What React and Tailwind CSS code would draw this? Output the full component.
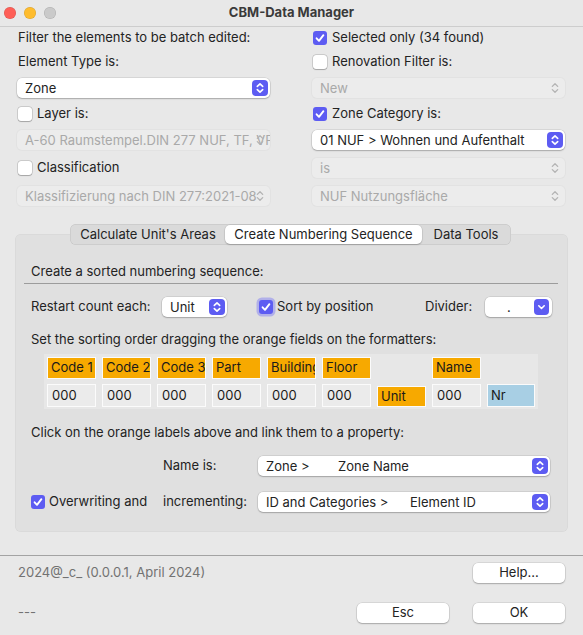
import React from "react";

const Chevrons = ({ color = "#fff", w = 1.6 }) => (
  <svg width="16" height="16" viewBox="0 0 16 16" fill="none" stroke={color} strokeWidth={w} strokeLinecap="round" strokeLinejoin="round">
    <path d="M5.3 6.4 8 3.8l2.7 2.6" />
    <path d="M5.3 9.6 8 12.2l2.7-2.6" />
  </svg>
);

const ChevronDown = () => (
  <svg width="15" height="16" viewBox="0 0 15 16" fill="none" stroke="#fff" strokeWidth="1.6" strokeLinecap="round" strokeLinejoin="round">
    <path d="M4.8 6.8 7.5 9.5l2.7-2.7" />
  </svg>
);

function Popup({ children, disabled, className = "" }) {
  return (
    <div
      className={`relative flex items-center h-[20px] rounded-[5px] ${
        disabled
          ? "bg-[#ececec] shadow-[0_0_0_1px_#e2e2e2] text-[#a9a9a9]"
          : "bg-white shadow-[0_0_0_0.5px_rgba(0,0,0,0.14),0_1px_1.5px_rgba(0,0,0,0.22)] text-[#232323]"
      } ${className}`}
    >
      <div className="flex-1 pl-[8px] whitespace-nowrap overflow-hidden leading-[20px]">{children}</div>
      {disabled ? (
        <div className="absolute right-[2px] top-[2px] w-[16px] h-[16px] flex items-center justify-center">
          <Chevrons color="#b3b3b3" w={1.3} />
        </div>
      ) : (
        <div className="absolute right-[2px] top-[2px] w-[16px] h-[16px] rounded-[4px] bg-[#5d5cf2] flex items-center justify-center">
          <Chevrons />
        </div>
      )}
    </div>
  );
}

function Check({ checked, ring }) {
  return checked ? (
    <div className={`w-[14px] h-[14px] rounded-[3px] bg-[#5d5cf2] flex items-center justify-center shrink-0 ${ring ? "shadow-[0_0_0_2.5px_rgba(120,118,245,0.45)]" : ""}`}>
      <svg width="12" height="12" viewBox="0 0 12 12" fill="none" stroke="#fff" strokeWidth="1.9" strokeLinecap="round" strokeLinejoin="round">
        <path d="M2.6 6.3 5 8.8 9.4 3.2" />
      </svg>
    </div>
  ) : (
    <div className="w-[14px] h-[14px] rounded-[3px] bg-white shadow-[0_0_0_0.5px_rgba(0,0,0,0.22),0_0.5px_1px_rgba(0,0,0,0.2)] shrink-0" />
  );
}

function Button({ children }) {
  return (
    <div className="w-[92px] h-[20px] rounded-[5px] bg-white shadow-[0_0_0_0.5px_rgba(0,0,0,0.14),0_1px_1.5px_rgba(0,0,0,0.22)] flex items-center justify-center text-[#232323]">
      {children}
    </div>
  );
}

function Cell({ kind, children, className = "" }) {
  const bg = kind === "orange" ? "bg-[#f7a900]" : kind === "blue" ? "bg-[#a8cfe4]" : kind === "gray" ? "bg-[#ebebeb]" : "";
  if (!kind) return <div className={className} />;
  return (
    <div className={`border border-[#fbfbfb] ${bg} pl-[3px] flex items-center text-[#1a1a1a] whitespace-nowrap overflow-hidden ${className}`}>
      {children}
    </div>
  );
}

export default function App() {
  const labels = ["Code 1", "Code 2", "Code 3", "Part", "Building", "Floor"];
  return (
    <div className="w-[583px] h-[635px] bg-[#e8e8e8] font-['Inter',sans-serif] text-[13px] text-[#232323] overflow-hidden">
      {/* Title bar */}
      <div className="h-[27px] border-b border-[#cdcdcd] flex items-center relative">
        <div className="flex items-center gap-[8px] pl-[4px]">
          <div className="w-[12px] h-[12px] rounded-full bg-[#fe5f57] shadow-[inset_0_0_0_0.5px_rgba(0,0,0,0.15)]" />
          <div className="w-[12px] h-[12px] rounded-full bg-[#febc2e] shadow-[inset_0_0_0_0.5px_rgba(0,0,0,0.15)]" />
          <div className="w-[12px] h-[12px] rounded-full bg-[#cacaca] shadow-[inset_0_0_0_0.5px_rgba(0,0,0,0.15)]" />
        </div>
        <div className="absolute left-0 right-0 text-center font-bold text-[#3a3a3a] pointer-events-none">CBM-Data Manager</div>
      </div>

      {/* Filter section */}
      <div className="flex pl-[17px] gap-[42px]">
        <div className="w-[253px] flex flex-col">
          <div className="h-[22px] flex items-center pl-[1px]">Filter the elements to be batch edited:</div>
          <div className="h-[26px] flex items-center pl-[1px]">Element Type is:</div>
          <Popup className="mt-[3px]">Zone</Popup>
          <div className="h-[32px] flex items-center gap-[5px] pl-[1px]">
            <Check />
            <span>Layer is:</span>
          </div>
          <Popup disabled>A-60 Raumstempel.DIN 277 NUF, TF, VF, BGF</Popup>
          <div className="h-[36px] flex items-center gap-[5px] pl-[1px]">
            <Check />
            <span>Classification</span>
          </div>
          <Popup disabled>Klassifizierung nach DIN 277:2021-08</Popup>
        </div>
        <div className="w-[253px] flex flex-col">
          <div className="h-[22px] flex items-center gap-[5px] pl-[1px]">
            <Check checked />
            <span>Selected only (34 found)</span>
          </div>
          <div className="h-[26px] flex items-center gap-[5px] pl-[1px]">
            <Check />
            <span>Renovation Filter is:</span>
          </div>
          <Popup disabled className="mt-[3px]">New</Popup>
          <div className="h-[32px] flex items-center gap-[5px] pl-[1px]">
            <Check checked />
            <span>Zone Category is:</span>
          </div>
          <Popup>01 NUF &gt; Wohnen und Aufenthalt</Popup>
          <div className="h-[36px] flex items-center">
            <Popup disabled className="w-full">is</Popup>
          </div>
          <Popup disabled>NUF Nutzungsfläche</Popup>
        </div>
      </div>

      {/* Tab area */}
      <div className="mx-[15px] mt-[18px] w-[553px] flex flex-col">
        <div className="relative z-10 ml-[55px] w-[441px] h-[21px] rounded-[6px] bg-[#dadada] shadow-[inset_0_0_0_0.5px_rgba(0,0,0,0.12)] flex items-center p-[1px]">
          <div className="w-[154px] h-full flex items-center justify-center text-[#232323]">Calculate Unit's Areas</div>
          <div className="w-[197px] h-full rounded-[5px] bg-white shadow-[0_0_0_0.5px_rgba(0,0,0,0.1),0_1px_1.5px_rgba(0,0,0,0.2)] flex items-center justify-center text-[#232323]">Create Numbering Sequence</div>
          <div className="flex-1 h-full flex items-center justify-center text-[#232323]">Data Tools</div>
        </div>
        <div className="-mt-[11px] h-[298px] rounded-[6px] bg-[#e0e0e0] shadow-[inset_0_0_0_0.5px_rgba(0,0,0,0.05)] flex flex-col pt-[28px]">
          <div className="h-[20px] flex items-center pl-[16px]">Create a sorted numbering sequence:</div>
          <div className="mt-[1px] ml-[9px] mr-[10px] h-px bg-[#9c9c9c]" />

          <div className="mt-[13px] h-[20px] flex items-center pl-[16px]">
            <div className="w-[131px]">Restart count each:</div>
            <Popup className="w-[65px]">Unit</Popup>
            <div className="ml-[32px] w-[166px] flex items-center gap-[4px]">
              <Check checked ring />
              <span>Sort by position</span>
            </div>
            <div className="w-[60px]">Divider:</div>
            <div className="relative w-[67px] h-[20px] rounded-[5px] bg-white shadow-[0_0_0_0.5px_rgba(0,0,0,0.14),0_1px_1.5px_rgba(0,0,0,0.22)]">
              <div className="absolute left-[22px] top-0 leading-[20px]">.</div>
              <div className="absolute right-[3px] top-[2px] w-[15px] h-[16px] rounded-[4px] bg-[#5d5cf2] flex items-center justify-center">
                <ChevronDown />
              </div>
            </div>
          </div>

          <div className="mt-[13px] h-[20px] flex items-center pl-[16px]">Set the sorting order dragging the orange fields on the formatters:</div>

          <div className="mt-[4px] ml-[29px] w-[494px] h-[55px] bg-[#e7e7e7] pt-[3px] pl-[3px]">
            <div className="grid grid-cols-[repeat(9,49px)] gap-x-[6px]">
              {labels.map((l) => (
                <Cell key={l} kind="orange" className="h-[22px]">{l}</Cell>
              ))}
              <div />
              <Cell kind="orange" className="h-[22px]">Name</Cell>
              <div />
            </div>
            <div className="grid grid-cols-[repeat(9,49px)] gap-x-[6px] mt-[5px]">
              {labels.map((l) => (
                <Cell key={l} kind="gray" className="h-[23px] pl-[4px]">000</Cell>
              ))}
              <Cell kind="orange" className="h-[21px] mt-[2px]">Unit</Cell>
              <Cell kind="gray" className="h-[23px] pl-[4px]">000</Cell>
              <Cell kind="blue" className="h-[23px] w-[48px]">Nr</Cell>
            </div>
          </div>

          <div className="mt-[14px] h-[20px] flex items-center pl-[16px]">Click on the orange labels above and link them to a property:</div>

          <div className="mt-[13px] h-[20px] flex items-center">
            <div className="pl-[148px] w-[243px]">Name is:</div>
            <Popup className="w-[292px]">
              <span className="inline-block w-[72px]">Zone &gt;</span>
              <span>Zone Name</span>
            </Popup>
          </div>

          <div className="mt-[16px] h-[20px] flex items-center">
            <div className="pl-[16px] w-[148px] flex items-center gap-[4px]">
              <Check checked />
              <span>Overwriting and</span>
            </div>
            <div className="w-[95px]">incrementing:</div>
            <Popup className="w-[292px]">
              <span className="inline-block w-[144px]">ID and Categories &gt;</span>
              <span>Element ID</span>
            </Popup>
          </div>
        </div>
      </div>

      {/* Footer */}
      <div className="mt-[23px] h-px bg-[#a3a3a3]" />
      <div className="mt-[7px] h-[20px] flex items-center pl-[18px] pr-[18px]">
        <div className="text-[#727272]">2024@_c_ (0.0.0.1, April 2024)</div>
        <div className="ml-auto">
          <Button>Help...</Button>
        </div>
      </div>
      <div className="mt-[20px] h-[20px] flex items-center pl-[18px] pr-[18px]">
        <div className="text-[#727272]">---</div>
        <div className="ml-auto flex gap-[24px]">
          <Button>Esc</Button>
          <Button>OK</Button>
        </div>
      </div>
    </div>
  );
}
